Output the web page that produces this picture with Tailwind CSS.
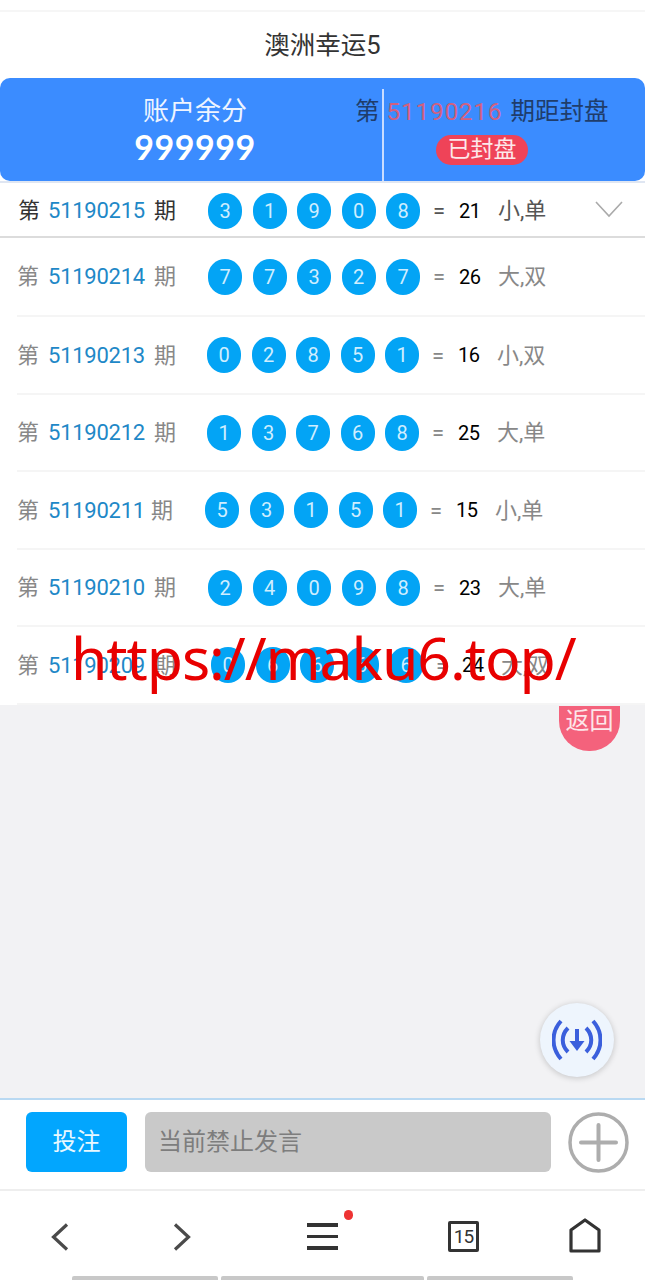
<!DOCTYPE html>
<html lang="zh-CN">
<head>
    <meta charset="UTF-8">
    <meta name="viewport" content="width=device-width, initial-scale=1.0">
    <title>澳洲幸运5</title>
    <script src="https://cdn.jsdelivr.net/npm/@tailwindcss/browser@4"></script>
</head>
<body class="bg-white">
<div class="relative w-[645px] h-[1280px] overflow-hidden flex flex-col font-['Roboto','Noto_Sans_CJK_SC',sans-serif]">

    <!-- title -->
    <div class="h-[10px] shrink-0 border-b-2 border-[#f6f6f6] box-content"></div>
    <div class="h-[66px] shrink-0 flex items-center justify-center text-[25.5px] text-[#333]">澳洲幸运5</div>

    <!-- account card -->
    <div class="h-[103px] shrink-0 flex bg-[#3b8cff] rounded-[10px]">
        <div class="w-[382px] shrink-0 flex flex-col items-center pl-[8px] pt-[16px] text-white">
            <div class="text-[26px] leading-[34px] text-[#eef4ff]">账户余分</div>
            <div class="text-[34px] leading-[37px] font-bold font-['Lato','Noto_Sans_CJK_SC',sans-serif] tracking-[0.5px]">999999</div>
        </div>
    </div>

    <!-- latest -->
    <div class="h-[57px] shrink-0 flex items-center pl-[18px] pt-[2px] border-t-2 border-b-2 border-t-[#dfe6f2] border-b-[#dcdcdc] text-[22px] text-[#333]">
        <span>第</span><span class="ml-[8px] w-[98px] tracking-[-0.25px] text-[#1e88c7]">51190215</span><span class="ml-[8px] w-[54px]">期</span>
        <div class="flex gap-[10.5px] text-[20px] text-[#cfeeff]">
            <span class="w-[34px] h-[36px] rounded-full bg-[#03a4f5] flex items-center justify-center">3</span>
            <span class="w-[34px] h-[36px] rounded-full bg-[#03a4f5] flex items-center justify-center">1</span>
            <span class="w-[34px] h-[36px] rounded-full bg-[#03a4f5] flex items-center justify-center">9</span>
            <span class="w-[34px] h-[36px] rounded-full bg-[#03a4f5] flex items-center justify-center">0</span>
            <span class="w-[34px] h-[36px] rounded-full bg-[#03a4f5] flex items-center justify-center">8</span>
        </div>
        <span class="ml-[13px] w-[26px] text-[#555]">=</span><span class="w-[30px] text-[20px] tracking-[-0.5px] text-black">21</span><span class="ml-[9px] w-[50px] text-[#555]">小,单</span>
        <svg class="ml-[47px] -mt-[3px]" width="28" height="18" viewBox="0 0 28 18" fill="none" stroke="#aaa" stroke-width="1.6"><path d="M1 2 14 16 27 2"/></svg>
    </div>

    <!-- history -->
    <div class="h-[467px] shrink-0 pl-[17px] text-[22px] text-[#888]">
        <div class="h-[79px] flex items-center border-b-2 border-[#f5f5f5]">
            <span>第</span><span class="ml-[9px] w-[98px] tracking-[-0.25px] text-[#1e88c7]">51190214</span><span class="ml-[8px] w-[54px]">期</span>
            <div class="flex gap-[10.5px] text-[20px] text-[#cfeeff]">
                <span class="w-[34px] h-[36px] rounded-full bg-[#03a4f5] flex items-center justify-center">7</span>
                <span class="w-[34px] h-[36px] rounded-full bg-[#03a4f5] flex items-center justify-center">7</span>
                <span class="w-[34px] h-[36px] rounded-full bg-[#03a4f5] flex items-center justify-center">3</span>
                <span class="w-[34px] h-[36px] rounded-full bg-[#03a4f5] flex items-center justify-center">2</span>
                <span class="w-[34px] h-[36px] rounded-full bg-[#03a4f5] flex items-center justify-center">7</span>
            </div>
            <span class="ml-[13px] w-[26px]">=</span><span class="w-[30px] text-[20px] tracking-[-0.5px] text-black">26</span><span class="ml-[9px]">大,双</span>
        </div>
        <div class="h-[78px] flex items-center border-b-2 border-[#f5f5f5]">
            <span>第</span><span class="ml-[9px] w-[98px] tracking-[-0.25px] text-[#1e88c7]">51190213</span><span class="ml-[8px] w-[53px]">期</span>
            <div class="flex gap-[10.5px] text-[20px] text-[#cfeeff]">
                <span class="w-[34px] h-[36px] rounded-full bg-[#03a4f5] flex items-center justify-center">0</span>
                <span class="w-[34px] h-[36px] rounded-full bg-[#03a4f5] flex items-center justify-center">2</span>
                <span class="w-[34px] h-[36px] rounded-full bg-[#03a4f5] flex items-center justify-center">8</span>
                <span class="w-[34px] h-[36px] rounded-full bg-[#03a4f5] flex items-center justify-center">5</span>
                <span class="w-[34px] h-[36px] rounded-full bg-[#03a4f5] flex items-center justify-center">1</span>
            </div>
            <span class="ml-[13px] w-[26px]">=</span><span class="w-[30px] text-[20px] tracking-[-0.5px] text-black">16</span><span class="ml-[9px]">小,双</span>
        </div>
        <div class="h-[77px] flex items-center border-b-2 border-[#f5f5f5]">
            <span>第</span><span class="ml-[9px] w-[98px] tracking-[-0.25px] text-[#1e88c7]">51190212</span><span class="ml-[8px] w-[53px]">期</span>
            <div class="flex gap-[10.5px] text-[20px] text-[#cfeeff]">
                <span class="w-[34px] h-[36px] rounded-full bg-[#03a4f5] flex items-center justify-center">1</span>
                <span class="w-[34px] h-[36px] rounded-full bg-[#03a4f5] flex items-center justify-center">3</span>
                <span class="w-[34px] h-[36px] rounded-full bg-[#03a4f5] flex items-center justify-center">7</span>
                <span class="w-[34px] h-[36px] rounded-full bg-[#03a4f5] flex items-center justify-center">6</span>
                <span class="w-[34px] h-[36px] rounded-full bg-[#03a4f5] flex items-center justify-center">8</span>
            </div>
            <span class="ml-[13px] w-[26px]">=</span><span class="w-[30px] text-[20px] tracking-[-0.5px] text-black">25</span><span class="ml-[9px]">大,单</span>
        </div>
        <div class="h-[78px] flex items-center border-b-2 border-[#f5f5f5]">
            <span>第</span><span class="ml-[9px] w-[95px] tracking-[-0.25px] text-[#1e88c7]">51190211</span><span class="ml-[8px] w-[54px]">期</span>
            <div class="flex gap-[10.5px] text-[20px] text-[#cfeeff]">
                <span class="w-[34px] h-[36px] rounded-full bg-[#03a4f5] flex items-center justify-center">5</span>
                <span class="w-[34px] h-[36px] rounded-full bg-[#03a4f5] flex items-center justify-center">3</span>
                <span class="w-[34px] h-[36px] rounded-full bg-[#03a4f5] flex items-center justify-center">1</span>
                <span class="w-[34px] h-[36px] rounded-full bg-[#03a4f5] flex items-center justify-center">5</span>
                <span class="w-[34px] h-[36px] rounded-full bg-[#03a4f5] flex items-center justify-center">1</span>
            </div>
            <span class="ml-[13px] w-[26px]">=</span><span class="w-[30px] text-[20px] tracking-[-0.5px] text-black">15</span><span class="ml-[9px]">小,单</span>
        </div>
        <div class="h-[77px] flex items-center border-b-2 border-[#f5f5f5]">
            <span>第</span><span class="ml-[9px] w-[98px] tracking-[-0.25px] text-[#1e88c7]">51190210</span><span class="ml-[8px] w-[54px]">期</span>
            <div class="flex gap-[10.5px] text-[20px] text-[#cfeeff]">
                <span class="w-[34px] h-[36px] rounded-full bg-[#03a4f5] flex items-center justify-center">2</span>
                <span class="w-[34px] h-[36px] rounded-full bg-[#03a4f5] flex items-center justify-center">4</span>
                <span class="w-[34px] h-[36px] rounded-full bg-[#03a4f5] flex items-center justify-center">0</span>
                <span class="w-[34px] h-[36px] rounded-full bg-[#03a4f5] flex items-center justify-center">9</span>
                <span class="w-[34px] h-[36px] rounded-full bg-[#03a4f5] flex items-center justify-center">8</span>
            </div>
            <span class="ml-[13px] w-[26px]">=</span><span class="w-[30px] text-[20px] tracking-[-0.5px] text-black">23</span><span class="ml-[9px]">大,单</span>
        </div>
        <div class="h-[78px] flex items-center border-b-2 border-[#f5f5f5]">
            <span>第</span><span class="ml-[9px] w-[98px] tracking-[-0.25px] text-[#1e88c7]">51190209</span><span class="ml-[8px] w-[57px]">期</span>
            <div class="flex gap-[10.5px] text-[20px] text-[#cfeeff]">
                <span class="w-[34px] h-[36px] rounded-full bg-[#03a4f5] flex items-center justify-center">0</span>
                <span class="w-[34px] h-[36px] rounded-full bg-[#03a4f5] flex items-center justify-center">6</span>
                <span class="w-[34px] h-[36px] rounded-full bg-[#03a4f5] flex items-center justify-center">6</span>
                <span class="w-[34px] h-[36px] rounded-full bg-[#03a4f5] flex items-center justify-center">6</span>
                <span class="w-[34px] h-[36px] rounded-full bg-[#03a4f5] flex items-center justify-center">6</span>
            </div>
            <span class="ml-[13px] w-[26px]">=</span><span class="w-[30px] text-[20px] tracking-[-0.5px] text-black">24</span><span class="ml-[9px]">大,双</span>
        </div>
    </div>

    <!-- empty chat area -->
    <div class="flex-1 bg-[#f2f2f4]"></div>

    <!-- input bar -->
    <div class="h-[93px] shrink-0 flex items-center pl-[26px] pb-[5px] border-t-2 border-[#b9d9f2] border-b-2 border-b-[#eee]">
        <div class="w-[101px] h-[60px] rounded-[6px] bg-[#02a6fe] flex items-center justify-center text-[24px] text-[#e8f8ff]">投注</div>
        <div class="ml-[18px] w-[406px] h-[60px] rounded-[6px] bg-[#c9c9c9] flex items-center pl-[13px] text-[24px] text-[#7d7d7d]">当前禁止发言</div>
        <svg class="ml-[17px]" width="61" height="61" viewBox="0 0 61 61" fill="none" stroke="#adadad"><ellipse cx="30.5" cy="30.5" rx="28.5" ry="28.5" stroke-width="3.5"/><path d="M30.5 13v35M13 30.5h35" stroke-width="4" stroke-linecap="round"/></svg>
    </div>

    <!-- browser nav -->
    <div class="relative h-[89px] shrink-0 flex items-start pt-[22px] pl-[50px]">
        <svg class="mt-[10px]" width="20" height="28" viewBox="0 0 20 28" fill="none" stroke="#4a4a4a" stroke-width="3.2"><path d="M17 1.5 3.5 14 17 26.5"/></svg>
        <svg class="ml-[102px] mt-[10px]" width="20" height="28" viewBox="0 0 20 28" fill="none" stroke="#4a4a4a" stroke-width="3.2"><path d="M3 1.5 16.5 14 3 26.5"/></svg>
        <div class="relative ml-[115px] mt-[10px] w-[31px] flex flex-col gap-[8px]">
            <div class="h-[3.5px] bg-[#333]"></div>
            <div class="h-[3.5px] bg-[#333]"></div>
            <div class="h-[3.5px] bg-[#333]"></div>
            <span class="absolute -top-[13px] -right-[15px] w-[9px] h-[10px] rounded-full bg-[#ee3333]"></span>
        </div>
        <div class="ml-[110px] mt-[8px] w-[31px] h-[31px] border-[3px] border-[#333] rounded-[2px] flex items-center justify-center text-[19px] tracking-[-1px] leading-none text-[#333]">15</div>
        <svg class="ml-[90px] mt-[5px]" width="32" height="35" viewBox="0 0 32 35" fill="none" stroke="#333" stroke-width="3.2" stroke-linejoin="round"><path d="M2 12 16 2 30 12V33H2Z"/></svg>
        <div class="absolute left-[72px] bottom-0 flex gap-[3px]">
            <div class="w-[146px] h-[4px] bg-[#c8c8c8] rounded-t-[2px]"></div>
            <div class="w-[203px] h-[4px] bg-[#c8c8c8] rounded-t-[2px]"></div>
            <div class="w-[146px] h-[4px] bg-[#c8c8c8] rounded-t-[2px]"></div>
        </div>
    </div>

    <!-- countdown panel, sits over the card -->
    <div class="absolute left-[382px] top-[89px] w-[263px] h-[92px] border-l-2 border-[#c9dcff]">
        <div class="absolute -left-[29px] top-[7px] w-[290px] flex text-[24.5px] leading-[32px] text-[#1f3d6b] whitespace-nowrap">
            <span>第</span><span class="ml-[7px] w-[116px] tracking-[0.7px] text-[#d2607f]">51190216</span><span class="ml-[8px]">期距封盘</span>
        </div>
        <div class="absolute left-[52px] top-[46px] w-[92px] h-[30px] rounded-full bg-[#ef4358] flex items-center justify-center text-[23px] text-[#fde8ea]">已封盘</div>
    </div>

    <!-- floating buttons -->
    <div class="absolute left-[559px] top-[706px] w-[61px] h-[45px] overflow-hidden">
        <div class="w-[61px] h-[45px] rounded-b-[30px] bg-[#f4627c] flex items-start justify-center text-[24px] leading-[30px] text-[#fde6ea]">返回</div>
    </div>
    <div class="absolute left-[540px] top-[1003px] w-[74px] h-[74px] rounded-full bg-[#eef5fd] shadow-[0_1px_6px_rgba(0,0,0,0.2)] flex items-center justify-center">
        <svg width="50" height="44" viewBox="0 0 50 44" fill="none" stroke="#3b5fdc" stroke-width="4"><path d="M9 3C-1 14-1 30 9 41M41 3C51 14 51 30 41 41M16 10C9 17 9 27 16 34M34 10C41 17 41 27 34 34"/><path d="M25 11V27" stroke-width="4"/><path d="M17.5 23H32.5L25 33Z" fill="#3b5fdc" stroke="none"/></svg>
    </div>

    <!-- watermark -->
    <div class="absolute left-[71px] top-[617px] text-[59px] leading-[80px] tracking-[-1.1px] text-[#e80000] whitespace-nowrap font-['Noto_Sans','Noto_Sans_CJK_SC',sans-serif]">https://maku6.top/</div>
</div>
</body>
</html>
